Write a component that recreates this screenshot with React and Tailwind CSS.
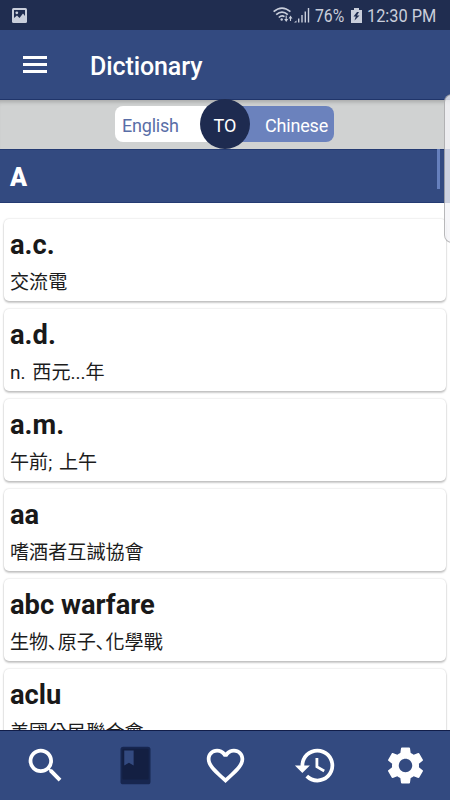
import React, { useState } from 'react'
import { MdSearch, MdFavoriteBorder, MdHistory, MdSettings } from 'react-icons/md'

const words = [
  { word: 'a.c.', meaning: '交流電' },
  { word: 'a.d.', meaning: 'n. 西元...年' },
  { word: 'a.m.', meaning: '午前; 上午' },
  { word: 'aa', meaning: '嗜酒者互誡協會' },
  { word: 'abc warfare', meaning: '生物､原子､化學戰' },
  { word: 'aclu', meaning: '美國公民聯合會' },
]

// closed book with a lighter bookmark ribbon
const BookIcon = ({ size }) => (
  <svg width={size} height={size} viewBox="0 0 24 24">
    <rect x="4" y="2" width="16" height="20" rx="1.400" fill="#17264f" />
    <rect x="5" y="3" width="14" height="16.500" rx="0.600" fill="#131f42" />
    <path d="M6 4h5v8l-2.500-1.500L6 12z" fill="#334a80" />
  </svg>
)

const tabs = [
  { id: 'search', Icon: MdSearch },
  { id: 'dictionary', Icon: BookIcon },
  { id: 'favorites', Icon: MdFavoriteBorder },
  { id: 'history', Icon: MdHistory },
  { id: 'settings', Icon: MdSettings },
]

const StatusBar = () => (
  <div className="flex h-[30px] shrink-0 items-center justify-between bg-[#202d50] pl-3 pr-[13px] text-[#c9cedb]">
    <svg className="size-[15px]" viewBox="0 0 15 15">
      <rect width="15" height="15" rx="1.5" fill="currentColor" />
      <path d="M2 2h11v6L11 5.500 7.500 10 5 7.500 2 10z" fill="#202d50" />
      <circle cx="4.800" cy="4.800" r="1.400" fill="currentColor" />
    </svg>
    <div className="flex items-center">
      <svg className="mr-px h-4 w-5" viewBox="0 0 20 16" fill="none" stroke="currentColor" strokeWidth="1.700">
        <path d="M.6 4.700Q9 -2.500 17.400 4.700M3.200 7.700Q9 2.500 14.800 7.700M5.800 10.500Q8.700 7.800 11.500 9.600" />
        <circle cx="8.700" cy="12.500" r="1.200" fill="currentColor" stroke="none" />
        <path d="M13.200 8.500v4M17.500 14v-4" strokeWidth="1.100" />
        <path d="M11.200 12h4l-2 3zM15.500 11.500h4l-2-3z" fill="currentColor" stroke="none" />
      </svg>
      <svg className="mr-[5px] h-4 w-4" viewBox="0 0 16 16" fill="currentColor">
        <path d="M0 15.500l2.500-2v2zM4 11.500h1.400v4H4zM7.300 8h1.400v7.500H7.300zM10.600 4.500H12v11h-1.400zM13.800 1h1.400v14.500h-1.400z" />
      </svg>
      <span className="w-[31px] pt-px text-[19px] leading-none">
        <span className="inline-block origin-left scale-x-[0.83]">76%</span>
      </span>
      <svg className="ml-[5px] mr-[5px] h-[15px] w-[11px]" viewBox="0 0 11 15">
        <path d="M3 0h5v2h3v13H0V2h3z" fill="currentColor" />
        <path d="M6 4L2.500 8.500h2.300L3.500 12.500 8.500 7.500H6L8 4z" fill="#202d50" />
      </svg>
      <span className="w-[70px] whitespace-nowrap pt-px text-[19px] leading-none">
        <span className="inline-block origin-left scale-x-[0.86]">12:30 PM</span>
      </span>
    </div>
  </div>
)

const WordCard = ({ word, meaning }) => (
  <div className="h-[82px] shrink-0 rounded-[5px] bg-white px-1.5 pt-[10px] shadow-[0_0_2px_rgba(0,0,0,0.2),0_2px_2px_rgba(0,0,0,0.2)]">
    <h2 className="text-[27.300px] font-bold leading-8 text-[#191919]">{word}</h2>
    <p className="mt-[9px] whitespace-nowrap text-[19.100px] leading-[26px] text-[#1c1c1c] [word-spacing:2px]">{meaning}</p>
  </div>
)

const App = () => {
  const [active, setActive] = useState('dictionary')

  return (
    <div className="relative flex h-[800px] w-[450px] flex-col overflow-hidden bg-white font-[Roboto,'Noto_Sans_CJK_TC',sans-serif]">
      <StatusBar />

      <header className="flex h-[69px] shrink-0 items-center bg-[#334a80] pl-[23px] pt-[4px] text-white">
        <button className="mr-[43px] flex w-6 -translate-y-[2px] flex-col gap-[4px]">
          <span className="h-[3px] w-full bg-current" />
          <span className="h-[3px] w-full bg-current" />
          <span className="h-[3px] w-full bg-current" />
        </button>
        <h1 className="text-[25px] font-medium tracking-[-0.1px]">Dictionary</h1>
      </header>

      {/* language switch */}
      <div className="flex h-[50px] shrink-0 items-center justify-center border-t border-[#20356a] bg-[#d0d2d2] pr-px text-[18px] shadow-[inset_0_5px_4px_-3px_rgba(0,0,0,0.2)]">
        <div className="flex h-9 w-[219px] -translate-y-px items-center rounded-lg bg-[linear-gradient(90deg,#fff_50%,#6b82bd_50%)]">
          <span className="w-[85px] pl-[7px] pt-[3px] tracking-[-0.2px] text-[#596ea7]">English</span>
          <span className="flex size-[50px] items-center justify-center rounded-full bg-[#1e2b50] pt-[3px] text-white">TO</span>
          <span className="flex-1 pr-1.5 pt-[3px] text-right tracking-[-0.2px] text-white">Chinese</span>
        </div>
      </div>

      <div className="flex h-[54px] shrink-0 items-center border-y border-[#243b72] bg-[#334a80] pl-2.5 pt-1">
        <span className="text-[25px] font-black text-white">A</span>
      </div>

      <main className="flex min-h-0 flex-1 flex-col gap-2 overflow-hidden px-1 pt-4">
        {words.map((item) => (
          <WordCard key={item.word} word={item.word} meaning={item.meaning} />
        ))}
      </main>

      <nav className="grid h-[70px] shrink-0 grid-cols-5 border-t border-[#111d49] bg-[#334a80] pb-px">
        {tabs.map(({ id, Icon }) => (
          <button
            key={id}
            onClick={() => setActive(id)}
            className={`flex items-center justify-center ${active === id ? 'text-[#162143]' : 'text-white'}`}
          >
            <Icon size={45} />
          </button>
        ))}
      </nav>

      {/* scroll thumb and edge panel handle lie over the list */}
      <div className="absolute left-[437px] top-[149px] h-10 w-[3px] bg-[#6680bd]" />
      <div className="absolute left-[444px] top-[94px] h-[149px] w-5 rounded-lg border border-black/25 bg-[#f4f4f8]/80" />
    </div>
  )
}

export default App
